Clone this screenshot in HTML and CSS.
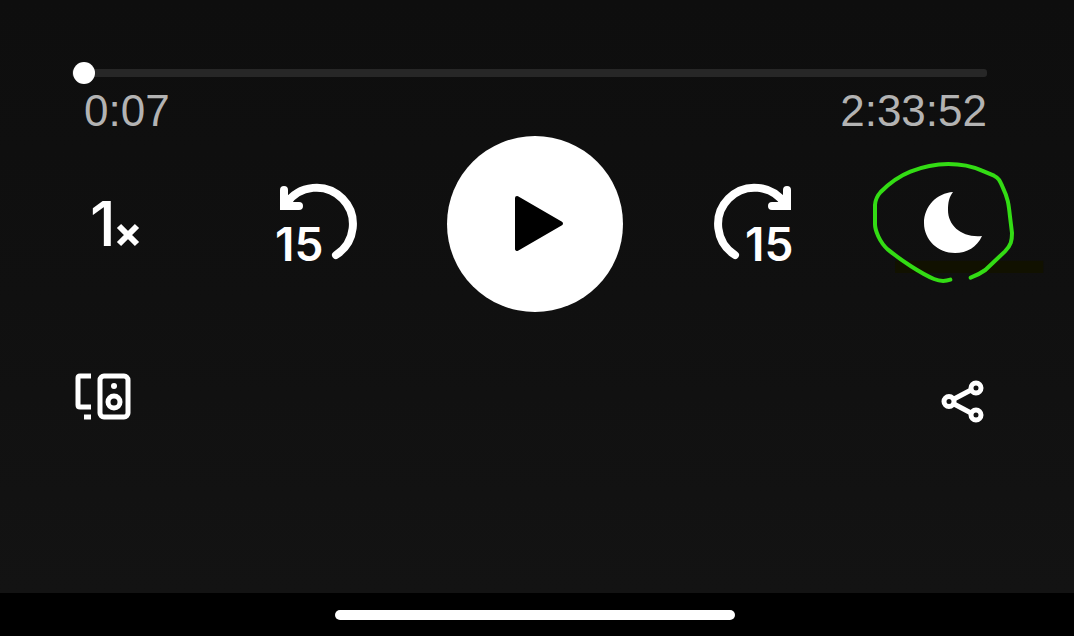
FILE: index.html
```
<!DOCTYPE html>
<html lang="en">
<head>
    <meta charset="UTF-8">
    <meta name="viewport" content="width=device-width, initial-scale=1.0">
    <title>Player</title>
    <link rel="stylesheet" href="styles.css">
</head>
<body>
    <main class="player">
        <!-- Progress -->
        <section class="progress" aria-label="Progress">
            <input class="seek-bar" type="range" min="0" max="9232" value="7" aria-label="Playback position">
            <div class="times">
                <span>0:07</span>
                <span>2:33:52</span>
            </div>
        </section>

        <!-- Playback controls -->
        <section class="controls" aria-label="Playback controls">
            <button class="control speed" type="button" aria-label="Playback speed 1x">
                <svg viewBox="0 0 88 88" aria-hidden="true">
                    <text class="speed-number" x="18" y="66">1</text>
                    <path class="line speed-times" d="M47 46L65 64M65 46L47 64"/>
                </svg>
            </button>

            <div class="transport">
                <button class="control" type="button" aria-label="Back 15 seconds">
                    <svg viewBox="0 0 88 88" aria-hidden="true">
                        <path class="line arc" d="M13 24A36.500 36.500 0 1 1 63 75"/>
                        <path class="line arc" d="M11 10V26H26"/>
                        <path class="fill" d="M7 22H15V30H7Z"/>
                        <text class="seconds" x="2" y="81">15</text>
                    </svg>
                </button>
                <button class="play" type="button" aria-label="Play">
                    <svg viewBox="0 0 176 176" aria-hidden="true">
                        <path d="M70 62L114 87.500L70 113Z"/>
                    </svg>
                </button>
                <button class="control" type="button" aria-label="Forward 15 seconds">
                    <svg viewBox="0 0 88 88" aria-hidden="true">
                        <path class="line arc" d="M76 24A36.500 36.500 0 1 0 26 75"/>
                        <path class="line arc" d="M78 10V26H63"/>
                        <path class="fill" d="M74 22H82V30H74Z"/>
                        <text class="seconds" x="36" y="81">15</text>
                    </svg>
                </button>
            </div>

            <button class="control sleep" type="button" aria-label="Sleep timer">
                <svg class="marker" viewBox="0 0 600 450" aria-hidden="true">
                    <path class="smudge" d="M105 332H550V369H105Z"/>
                    <path class="scribble" d="M271 389C254 395 239 394 222 387C183 370 123 331 84 299C59 277 44 240 45 220V165C46 149 50 139 62 126C87 101 121 77 151 65C193 48 228 42 265 42C302 42 337 49 366 62L402 77C416 84 419 91 427 109C444 145 446 161 450 200L456 249C456 273 453 286 435 304L376 360C362 370 350 376 332 383"/>
                </svg>
                <svg viewBox="0 0 88 88" aria-hidden="true">
                    <path class="fill" d="M43 12C27 13 14 26 14 43C14 60 28 73 45 73C57 73 67 67 72 56C52 58 38 46 38 30C38 23 39 17 43 12Z"/>
                </svg>
            </button>
        </section>

        <!-- Devices and share -->
        <section class="actions" aria-label="More actions">
            <button class="action" type="button" aria-label="Connect to a device">
                <svg width="56" height="48" viewBox="0 0 56 48" aria-hidden="true">
                    <path class="line device" d="M16 3H5Q3 3 3 5V32Q3 34 5 34H16M9 44H16"/>
                    <rect class="line device" x="25" y="3" width="28" height="41" rx="4"/>
                    <circle class="fill" cx="39" cy="13" r="3"/>
                    <circle class="line device" cx="39" cy="29" r="6"/>
                </svg>
            </button>
            <button class="action share" type="button" aria-label="Share">
                <svg width="44" height="44" viewBox="0 0 44 44" aria-hidden="true">
                    <path class="line device" d="M13 19L30 10M13 24L30 33"/>
                    <circle class="line device" cx="8" cy="21.500" r="5"/>
                    <circle class="line device" cx="35" cy="8" r="5"/>
                    <circle class="line device" cx="35" cy="35" r="5"/>
                </svg>
            </button>
        </section>
    </main>

    <footer class="home-area">
        <div class="home-bar"></div>
    </footer>
</body>
</html>
```
FILE: styles.css
```
* {
    box-sizing: border-box;
}
body {
    display: flex;
    flex-direction: column;
    min-height: 100vh;
    margin: 0;
    background-color: #000;
    color: #fff;
    font-family: "Liberation Sans", Arial, sans-serif;
}
button {
    padding: 0;
    border: none;
    background: none;
    color: inherit;
    cursor: pointer;
}
svg {
    display: block;
    overflow: visible;
}
.player {
    flex: 1;
    padding-top: 62px;
    background: linear-gradient(#0e0e0e, #101010 50%, #131313);
}

/* Progress */
.progress {
    padding: 0 87px 0 72px;
}
.seek-bar {
    display: block;
    width: 100%;
    height: 22px;
    margin: 0;
    appearance: none;
    background: none;
}
.seek-bar::-webkit-slider-runnable-track {
    height: 8px;
    border-radius: 3px;
    background-color: #272727;
}
.seek-bar::-webkit-slider-thumb {
    appearance: none;
    width: 22px;
    height: 22px;
    margin-top: -7px;
    border-radius: 50%;
    background-color: #fff;
}
.times {
    display: flex;
    justify-content: space-between;
    height: 52px;
    padding-left: 12px;
    color: #b3b3b3;
    font-size: 44px;
    line-height: 54px;
}

/* Playback controls */
.controls {
    display: flex;
    align-items: center;
    justify-content: space-between;
    padding: 0 76px 0 72px;
}
.transport {
    display: flex;
    align-items: center;
    gap: 86px;
}
.control {
    position: relative;
    width: 88px;
    height: 88px;
}
.play {
    width: 176px;
    height: 176px;
    border-radius: 50%;
    background-color: #fff;
}
.play path {
    fill: #000;
    stroke: #000;
    stroke-width: 4px;
    stroke-linejoin: round;
}
.fill {
    fill: #fff;
}
.line {
    fill: none;
    stroke: #fff;
}
.arc {
    stroke-width: 8px;
    stroke-linecap: round;
}
.speed-times {
    stroke-width: 6px;
}
.speed-number,
.seconds {
    fill: #fff;
    font-family: Inter, sans-serif;
    font-weight: 600;
}
.speed-number {
    font-size: 62px;
    font-weight: 500;
}
.seconds {
    font-size: 46px;
}

/* Hand-drawn ring around the sleep timer */
.marker {
    position: absolute;
    top: -30px;
    left: -50px;
    width: 200px;
    height: 150px;
    pointer-events: none;
}
.sleep svg + svg {
    position: relative;
}
.smudge {
    fill: #111100;
}
.scribble {
    fill: none;
    stroke: #33dc14;
    stroke-width: 12px;
    stroke-linecap: round;
    stroke-linejoin: round;
}

/* Bottom actions */
.actions {
    display: flex;
    align-items: flex-start;
    justify-content: space-between;
    padding: 61px 89px 0 75px;
}
.share {
    padding-top: 7px;
}
.device {
    stroke-width: 5px;
}

.home-area {
    display: flex;
    justify-content: center;
    padding: 17px 5px 16px 0;
}
.home-bar {
    width: 400px;
    max-width: 60%;
    height: 10px;
    border-radius: 5px;
    background-color: #fff;
}
```
